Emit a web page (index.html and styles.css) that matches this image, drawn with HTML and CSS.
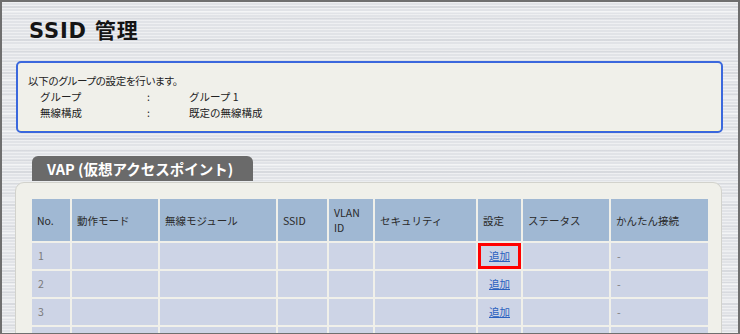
FILE: index.html
```html
<!DOCTYPE html>
<html lang="ja">
<head>
<meta charset="utf-8">
<title>SSID 管理</title>
<link rel="stylesheet" href="styles.css">
</head>
<body>
<div class="frame">
  <h1 class="title">SSID 管理</h1>
  <div class="info">
    <p class="lead">以下のグループの設定を行います。</p>
    <div class="kv">
      <span>グループ</span><span>:</span><span>グループ 1</span>
      <span>無線構成</span><span>:</span><span>既定の無線構成</span>
    </div>
  </div>
  <div class="section">
    <div class="tab">VAP (仮想アクセスポイント)</div>
    <div class="panel">
      <table class="vap">
        <colgroup>
          <col class="c-no"><col class="c-mode"><col class="c-mod"><col class="c-ssid"><col class="c-vlan"><col class="c-sec"><col class="c-set"><col class="c-stat"><col class="c-easy">
        </colgroup>
        <thead>
          <tr>
            <th>No.</th><th>動作モード</th><th>無線モジュール</th><th>SSID</th><th>VLAN<br>ID</th><th>セキュリティ</th><th>設定</th><th>ステータス</th><th>かんたん接続</th>
          </tr>
        </thead>
        <tbody>
          <tr><td>1</td><td></td><td></td><td></td><td></td><td></td><td class="set hl"><a href="#">追加</a></td><td></td><td>-</td></tr>
          <tr><td>2</td><td></td><td></td><td></td><td></td><td></td><td class="set"><a href="#">追加</a></td><td></td><td>-</td></tr>
          <tr><td>3</td><td></td><td></td><td></td><td></td><td></td><td class="set"><a href="#">追加</a></td><td></td><td>-</td></tr>
          <tr><td></td><td></td><td></td><td></td><td></td><td></td><td class="set"></td><td></td><td></td></tr>
        </tbody>
      </table>
    </div>
  </div>
</div>
</body>
</html>
```

FILE: styles.css
```css
html, body {
  margin: 0;
  padding: 0;
}
body {
  font-family: "Noto Sans CJK JP", sans-serif;
  font-size: 10.5px;
  color: #222;
}
.frame {
  box-sizing: border-box;
  width: 740px;
  height: 334px;
  overflow: hidden;
  border: 2px solid #6f6f6f;
  border-bottom-width: 1px;
  background-color: #e1e3e7;
  background-image:
    repeating-linear-gradient(to bottom, rgba(255,255,255,0.45) 0 1px, transparent 1px 3px),
    repeating-linear-gradient(to bottom, transparent 0 4px, rgba(120,125,135,0.09) 4px 6px, transparent 6px 11px),
    repeating-linear-gradient(to bottom, transparent 0 9px, rgba(255,255,255,0.35) 9px 11px, transparent 11px 17px);
}
.title {
  margin: 17px 0 0 27px;
  font-family: "DejaVu Sans", "Noto Sans CJK JP", sans-serif;
  font-weight: bold;
  font-size: 21px;
  letter-spacing: 0.8px;
  line-height: 25px;
  color: #151515;
}
.info {
  margin: 17px 15px 0 14px;
  border: 2px solid #3b68dd;
  border-radius: 5px;
  background: #f0f0ea;
  box-shadow: inset 0 -1px 0 #fbf6cf;
  padding: 10px 10px;
  line-height: 16px;
}
.lead {
  margin: 0;
  font-feature-settings: "palt";
  letter-spacing: -0.3px;
}
.kv {
  display: grid;
  grid-template-columns: 107px 42px auto;
  padding-left: 12px;
}
.section {
  margin: 23px 16px 0 13px;
}
.tab {
  box-sizing: border-box;
  width: 221px;
  height: 25px;
  margin-left: 17px;
  padding-left: 15px;
  background: #6a6a6a;
  border-radius: 6px 6px 0 0;
  color: #fff;
  font-weight: bold;
  font-size: 14.5px;
  line-height: 25px;
  white-space: nowrap;
}
.panel {
  margin-top: 1px;
  border: 1px solid #d2d2cc;
  border-radius: 9px 9px 0 0;
  background: #f0f0ea;
  padding: 14px 12px 20px 14px;
  height: 200px;
}
.vap {
  table-layout: fixed;
  border-collapse: separate;
  border-spacing: 2px;
  width: 680px;
}
.c-no { width: 38px; }
.c-mode { width: 86px; }
.c-mod { width: 116px; }
.c-ssid { width: 49px; }
.c-vlan { width: 44px; }
.c-sec { width: 101px; }
.c-set { width: 43px; }
.c-stat { width: 86px; }
.c-easy { width: 97px; }
.vap th {
  height: 42px;
  padding: 0 5px;
  background: #a0b8d3;
  color: #2a2a2a;
  font-weight: normal;
  text-align: left;
  vertical-align: middle;
  line-height: 15px;
}
.vap td {
  height: 26px;
  padding: 0 6px;
  background: #cdd4e6;
  color: #7a7a7a;
  line-height: 14px;
}
.vap td.set {
  text-align: center;
  padding: 0;
}
.vap td.hl {
  box-shadow: inset 0 0 0 3px #ff0000;
}
.vap a {
  color: #2b62c0;
  text-decoration: underline;
}
```
